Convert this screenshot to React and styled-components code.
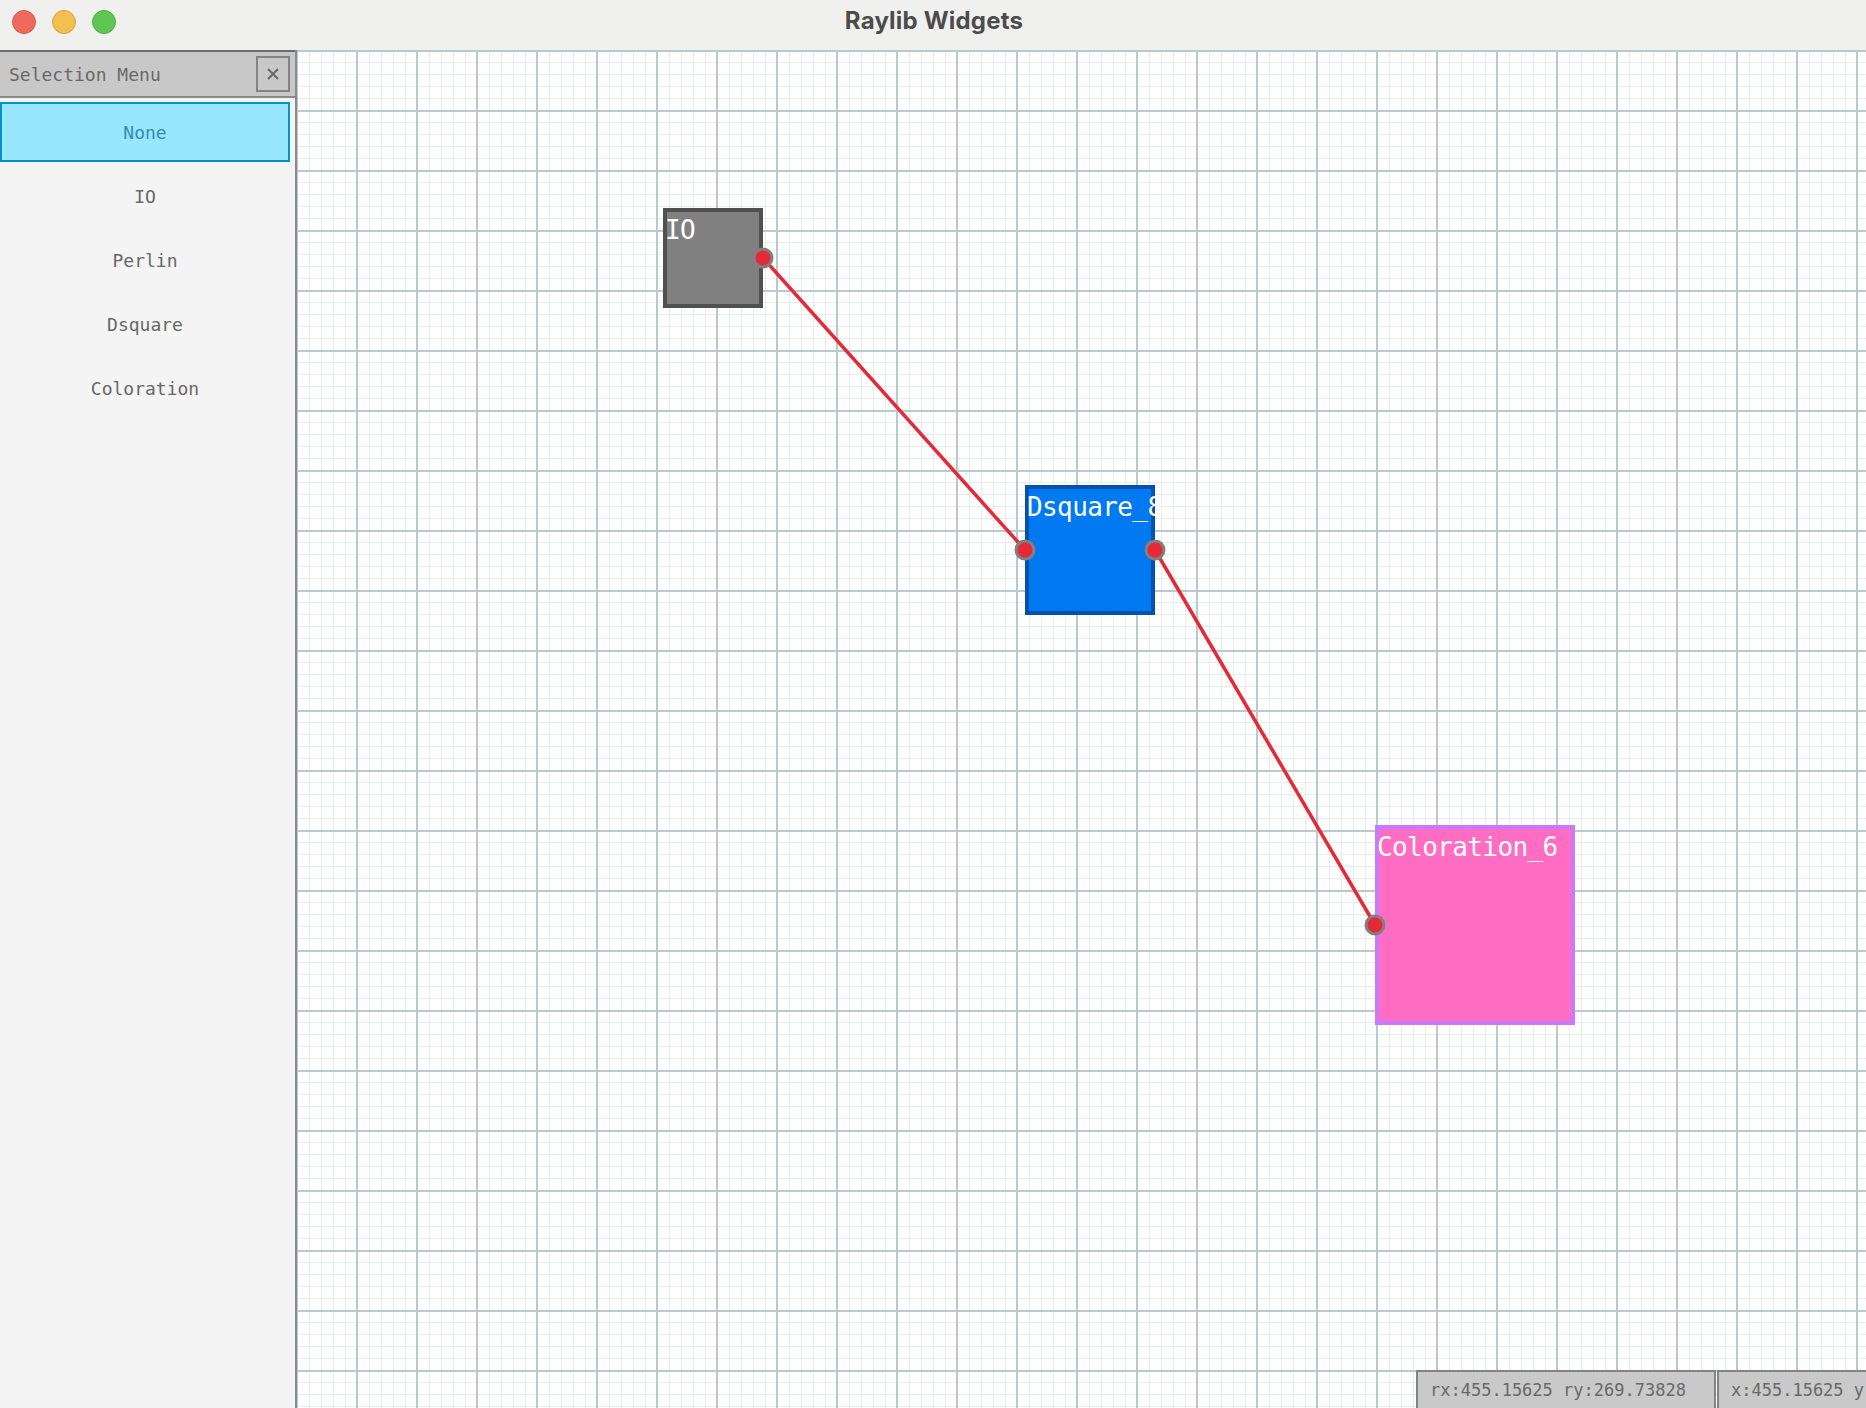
import React from 'react';
import styled, { createGlobalStyle } from 'styled-components';

const PIXEL_FONT = `"DejaVu Sans Mono", "Liberation Mono", monospace`;

const menuItems = ['None', 'IO', 'Perlin', 'Dsquare', 'Coloration'];

// positions are relative to the canvas origin (grid origin)
const nodes = [
    { id: 'io', label: 'IO', x: 366, y: 158, size: 100, fill: '#808080', edge: '#505050', input: false, output: true },
    { id: 'dsq', label: 'Dsquare_8', x: 728, y: 435, size: 130, fill: '#0079f1', edge: '#0052ac', input: true, output: true },
    { id: 'col', label: 'Coloration_6', x: 1078, y: 775, size: 200, fill: '#ff6dc2', edge: '#c87aff', input: true, output: false },
];

const links = [
    ['io', 'dsq'],
    ['dsq', 'col'],
];

const inPin = (n) => ({ x: n.x, y: n.y + n.size / 2 });
const outPin = (n) => ({ x: n.x + n.size, y: n.y + n.size / 2 });
const byId = (id) => nodes.find(n => n.id === id);

const App = () => {
    return (
        <>
            <GlobalStyle />
            <Window>
                <TitleBar>
                    <Lights>
                        <Light $color="#ee6a5f" $ring="#d75a50" />
                        <Light $color="#f5bf4f" $ring="#d9a43f" />
                        <Light $color="#61c554" $ring="#4fae44" />
                    </Lights>
                    <Title>Raylib Widgets</Title>
                    <span />
                </TitleBar>
                <Body>
                    <Sidebar>
                        <MenuHeader>
                            <HeaderText>Selection Menu</HeaderText>
                            <CloseButton>
                                <svg width="12" height="12" viewBox="0 0 12 12">
                                    <path d="M1 1 L11 11 M11 1 L1 11" stroke="#686868" strokeWidth="2" />
                                </svg>
                            </CloseButton>
                        </MenuHeader>
                        <MenuList>
                            {menuItems.map((item, i) => (
                                <MenuItem key={item} $active={i === 0}>{item}</MenuItem>
                            ))}
                        </MenuList>
                    </Sidebar>
                    <Canvas>
                        {nodes.map(n => (
                            <Node key={n.id} $x={n.x} $y={n.y} $size={n.size} $fill={n.fill} $edge={n.edge}>
                                <NodeTitle>{n.label}</NodeTitle>
                            </Node>
                        ))}
                        <WireLayer>
                            {links.map(([a, b]) => {
                                const p1 = outPin(byId(a));
                                const p2 = inPin(byId(b));
                                return (
                                    <line key={a + b} x1={p1.x} y1={p1.y} x2={p2.x} y2={p2.y}
                                        stroke="#e62937" strokeWidth="3.5" />
                                );
                            })}
                        </WireLayer>
                        {nodes.map(n => (
                            <React.Fragment key={n.id + '-pins'}>
                                {n.input && <Pin $x={inPin(n).x} $y={inPin(n).y} />}
                                {n.output && <Pin $x={outPin(n).x} $y={outPin(n).y} />}
                            </React.Fragment>
                        ))}
                        <StatusBar>
                            <StatusBox $width={300}>rx:455.15625 ry:269.73828</StatusBox>
                            <StatusBox $width={300}>x:455.15625 y:269.73828</StatusBox>
                        </StatusBar>
                    </Canvas>
                </Body>
            </Window>
        </>
    );
};

const GlobalStyle = createGlobalStyle`
    html, body {
        margin: 0;
        padding: 0;
        overflow: hidden;
        background: #f0f0ee;
    }
`;

const Window = styled.div`
    width: 1866px;
    height: 1408px;
    display: flex;
    flex-direction: column;
    overflow: hidden;
`;

const TitleBar = styled.div`
    height: 50px;
    flex: none;
    display: grid;
    grid-template-columns: 1fr auto 1fr;
    align-items: center;
    background: #f0f0ee;
`;

const Lights = styled.div`
    display: flex;
    gap: 16px;
    padding-left: 12px;
    padding-bottom: 6px;
`;

const Light = styled.span`
    width: 24px;
    height: 24px;
    border-radius: 50%;
    box-sizing: border-box;
    background: ${p => p.$color};
    border: 1px solid ${p => p.$ring};
`;

const Title = styled.div`
    font-family: Inter, "Liberation Sans", sans-serif;
    font-weight: 700;
    font-size: 24px;
    letter-spacing: 0.2px;
    color: #4c4c4c;
    padding-bottom: 10px;
    padding-left: 2px;
`;

const Body = styled.div`
    flex: 1;
    display: flex;
    min-height: 0;
`;

const Sidebar = styled.div`
    width: 295px;
    flex: none;
    background: #f4f4f4;
    border-right: 2px solid #8b8b8b;
    display: flex;
    flex-direction: column;
`;

const MenuHeader = styled.div`
    height: 44px;
    border-top: 2px solid #6e6e6e;
    border-bottom: 2px solid #898989;
    background: #c8c8c8;
    display: flex;
    align-items: center;
    justify-content: space-between;
    padding: 0 5px 0 9px;
`;

const HeaderText = styled.span`
    font-family: ${PIXEL_FONT};
    font-size: 18px;
    color: #686868;
`;

const CloseButton = styled.div`
    width: 34px;
    height: 36px;
    box-sizing: border-box;
    border: 2px solid #838383;
    display: flex;
    align-items: center;
    justify-content: center;
`;

const MenuList = styled.div`
    display: flex;
    flex-direction: column;
    gap: 4px;
    padding-top: 4px;
    width: 290px;
`;

const MenuItem = styled.div`
    height: 60px;
    box-sizing: border-box;
    display: flex;
    align-items: center;
    justify-content: center;
    font-family: ${PIXEL_FONT};
    font-size: 18px;
    border: 2px solid ${p => (p.$active ? '#0492c7' : 'transparent')};
    background: ${p => (p.$active ? '#97e8ff' : 'transparent')};
    color: ${p => (p.$active ? '#368baf' : '#686868')};
`;

const Canvas = styled.div`
    flex: 1;
    position: relative;
    overflow: hidden;
    background-color: #ffffff;
    background-image:
        linear-gradient(to right, #b9c9d0 2px, transparent 2px),
        linear-gradient(to bottom, #b9c9d0 2px, transparent 2px),
        linear-gradient(to right, #e6ecef 1px, transparent 1px),
        linear-gradient(to bottom, #e6ecef 1px, transparent 1px);
    background-size: 60px 60px, 60px 60px, 12px 12px, 12px 12px;
    background-position: -1px 0, 0 0, 0 0, 0 0;
`;

const Node = styled.div`
    position: absolute;
    left: ${p => p.$x}px;
    top: ${p => p.$y}px;
    width: ${p => p.$size}px;
    height: ${p => p.$size}px;
    box-sizing: border-box;
    background: ${p => p.$fill};
    border: 4px solid ${p => p.$edge};
`;

const NodeTitle = styled.div`
    margin: 5px 0 0 -2px;
    font-family: ${PIXEL_FONT};
    font-size: 26px;
    line-height: 26px;
    letter-spacing: -0.6px;
    color: #ffffff;
    white-space: nowrap;
`;

const WireLayer = styled.svg`
    position: absolute;
    left: 0;
    top: 0;
    width: 100%;
    height: 100%;
    pointer-events: none;
`;

const Pin = styled.span`
    position: absolute;
    left: ${p => p.$x}px;
    top: ${p => p.$y}px;
    width: 21px;
    height: 21px;
    box-sizing: border-box;
    border-radius: 50%;
    background: #e62937;
    border: 3px solid #808080;
    transform: translate(-50%, -50%);
`;

const StatusBar = styled.div`
    position: absolute;
    left: 1119px;
    top: 1320px;
    display: flex;
    gap: 1px;
`;

const StatusBox = styled.div`
    width: ${p => p.$width}px;
    height: 44px;
    flex: none;
    box-sizing: border-box;
    border: 2px solid #838383;
    background: #c9c9c9;
    padding-left: 12px;
    font-family: ${PIXEL_FONT};
    font-size: 17px;
    line-height: 36px;
    color: #686868;
    white-space: nowrap;
`;

export default App;
